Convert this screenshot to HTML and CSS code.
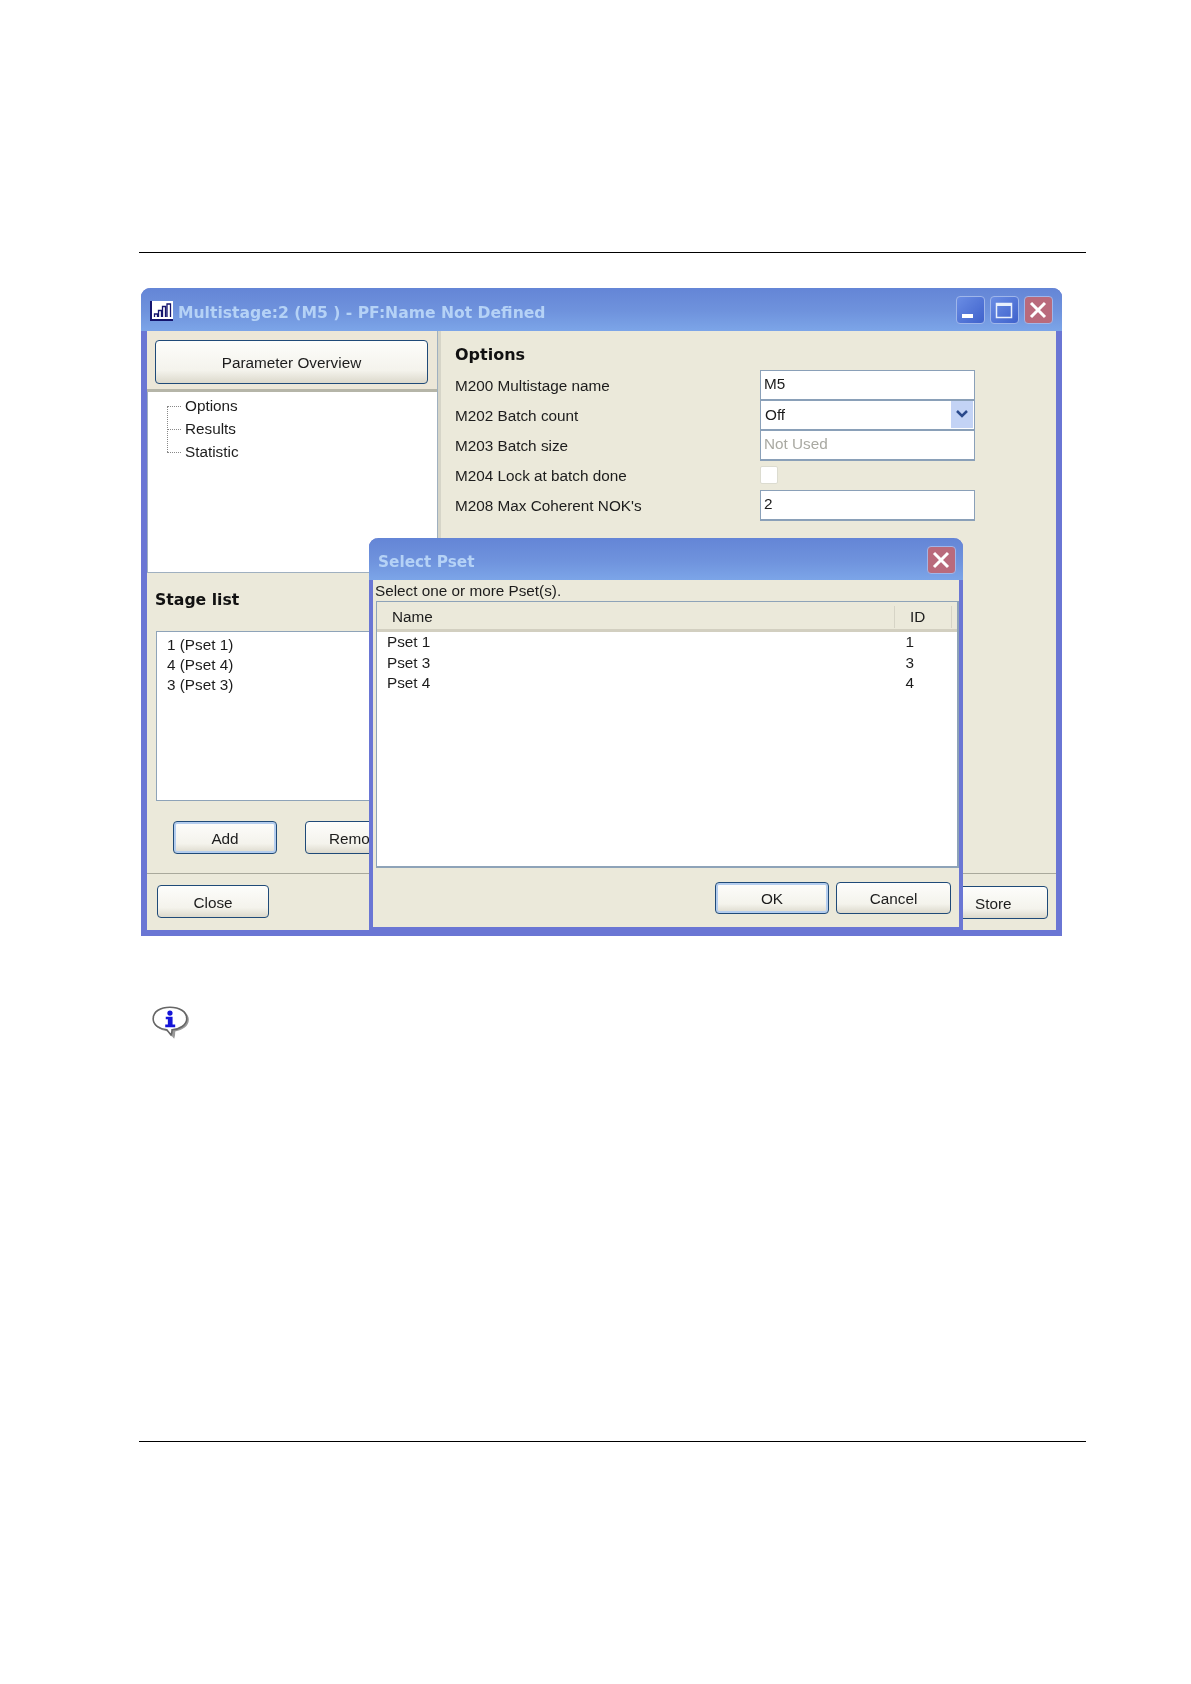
FILE: index.html
```html
<!DOCTYPE html>
<html lang="en">
<head>
<meta charset="utf-8">
<title>Multistage</title>
<link rel="stylesheet" href="styles.css">
</head>
<body>
<main class="page">
  <hr class="rule">
  <section class="win">
    <header class="titlebar">
      <svg class="app-icon" viewBox="0 0 23 20" width="23" height="20">
        <rect width="23" height="20" fill="#fff"/>
        <path d="M1 0V19H23" fill="none" stroke="#14146e" stroke-width="2"/>
        <path d="M4.500 16v-3h3v3M8.500 16V9.500h3V16M12.500 16V5.500h3V16M17 16V3h3.500v13" fill="none" stroke="#14146e" stroke-width="1.300"/>
      </svg>
      <span class="title-text">Multistage:2 (M5 ) - PF:Name Not Defined</span>
      <div class="caption">
        <span class="cap cap-blue"><svg viewBox="0 0 28 28" width="28" height="28"><rect x="6" y="18" width="11" height="4" fill="#fff"/></svg></span>
        <span class="cap cap-blue"><svg viewBox="0 0 28 28" width="28" height="28"><path d="M6.500 7.500h15v14h-15z" fill="none" stroke="#e8f0fc" stroke-width="1.500"/><rect x="6" y="7" width="16" height="3" fill="#e8f0fc"/></svg></span>
        <span class="cap cap-red"><svg viewBox="0 0 28 28" width="28" height="28"><path d="M7 7l14 14M21 7L7 21" stroke="#fff" stroke-width="3"/></svg></span>
      </div>
    </header>

    <div class="client">
      <div class="split">
        <aside class="left">
          <div class="left-top"><button class="btn btn-overview">Parameter Overview</button></div>
          <ul class="tree">
            <li>Options</li>
            <li>Results</li>
            <li>Statistic</li>
          </ul>
          <h2 class="stage-title">Stage list</h2>
          <ul class="stages">
            <li>1 (Pset 1)</li>
            <li>4 (Pset 4)</li>
            <li>3 (Pset 3)</li>
          </ul>
          <div class="stage-actions">
            <button class="btn btn-default btn-add">Add</button>
            <button class="btn btn-remove">Remove</button>
          </div>
        </aside>

        <div class="options">
          <h2 class="options-title">Options</h2>
          <div class="form">
            <label>M200 Multistage name</label>
            <div class="field">M5</div>
            <label>M202 Batch count</label>
            <div class="field field-combo"><span>Off</span>
              <span class="combo-arrow"><svg viewBox="0 0 20 24" width="20" height="24"><path d="M5 9l5 5 5-5" fill="none" stroke="#2b4a8c" stroke-width="2.500"/></svg></span>
            </div>
            <label>M203 Batch size</label>
            <div class="field field-off">Not Used</div>
            <label>M204 Lock at batch done</label>
            <div class="check-cell"><span class="check"></span></div>
            <label>M208 Max Coherent NOK's</label>
            <div class="field">2</div>
          </div>
        </div>
      </div>

      <footer class="win-foot">
        <button class="btn btn-close">Close</button>
        <button class="btn btn-store">Store</button>
      </footer>
    </div>

    <section class="dialog">
      <header class="dlg-title">
        <span class="dlg-title-text">Select Pset</span>
        <span class="cap cap-red"><svg viewBox="0 0 28 28" width="28" height="28"><path d="M7 7l14 14M21 7L7 21" stroke="#fff" stroke-width="3"/></svg></span>
      </header>
      <div class="dlg-client">
        <p class="dlg-msg">Select one or more Pset(s).</p>
        <div class="list">
          <div class="list-head">
            <span class="col-name">Name</span>
            <span class="col-id">ID</span>
          </div>
          <div class="list-row"><span>Pset 1</span><span>1</span></div>
          <div class="list-row"><span>Pset 3</span><span>3</span></div>
          <div class="list-row"><span>Pset 4</span><span>4</span></div>
        </div>
        <div class="dlg-foot">
          <button class="btn btn-default btn-ok">OK</button>
          <button class="btn btn-cancel">Cancel</button>
        </div>
      </div>
    </section>
  </section>

  <div class="note">
    <svg viewBox="0 0 40 34" width="42" height="36">
      <path d="M20 3C10 3 3 7 3 14c0 6 6 10 14 11l6 7c1-3 1-5 1-7 7-1 13-5 13-11C37 7 30 3 20 3z" fill="#9a9a9a"/>
      <path d="M19 2C10 2 3 6 3 13c0 6 6 10 13 10.500l4 5c1-2 1-4 1-5 7-.5 14-4.500 14-10.500C35 6 28 2 19 2z" fill="#fff" stroke="#666" stroke-width="1.500"/>
      <circle cx="19" cy="7.500" r="2.500" fill="#1414d8"/>
      <path d="M15 11h6.500v7.500H24V21H14.500v-2.500H17V13.500h-2z" fill="#1414d8"/>
    </svg>
  </div>

  <hr class="rule rule-bottom">
</main>
</body>
</html>
```

FILE: styles.css
```css
* { box-sizing: border-box; }

html, body {
  margin: 0;
  padding: 0;
  background: #fff;
}

.page {
  height: 1684px;
  padding-top: 252px;
  overflow: hidden;
  font-family: "Liberation Sans", "Noto Sans", sans-serif;
  font-size: 15.300px;
  color: #1c1c1c;
}

.rule {
  height: 1px;
  margin: 0 105px 0 139px;
  border: 0;
  background: #000;
}

.rule-bottom { margin-top: 400px; }

/* main window */
.win {
  position: relative;
  width: 921px;
  height: 648px;
  margin: 35px 0 0 141px;
  border: 6px solid #6a76d4;
  border-top: 0;
  border-radius: 9px 9px 0 0;
  background: #ebe9da;
  filter: blur(0.4px);
}

.titlebar {
  display: flex;
  align-items: center;
  height: 43px;
  margin: 0 -6px;
  padding: 3px 9px 0 9px;
  border-radius: 9px 9px 0 0;
  background: linear-gradient(#6485d6, #6f93dd 55%, #7ca5e8);
}

.app-icon { flex: none; margin-right: 5px; }

.title-text {
  padding-top: 4px;
  font-family: "DejaVu Sans", sans-serif;
  font-weight: 700;
  font-size: 15.600px;
  white-space: nowrap;
  color: #b5d2f6;
}

.caption {
  display: flex;
  gap: 5px;
  margin: -2px 0 0 auto;
}

.cap {
  display: block;
  flex: none;
  width: 29px;
  height: 28px;
  border: 1px solid #9fb6ea;
  border-radius: 4px;
  overflow: hidden;
}

.cap svg { display: block; margin: -1px; }

.cap-blue { background: linear-gradient(135deg, #6a8de4, #3f62cc); }
.cap-red { background: #b96a7c; }

/* client area */
.client {
  display: flex;
  flex-direction: column;
  height: 599px;
}

.split {
  display: flex;
  flex: none;
  height: 543px;
  border-bottom: 1px solid #a9a99c;
}

.left {
  flex: none;
  width: 291px;
  border-right: 1px solid #9fb0c0;
}

.left-top {
  height: 61px;
  padding: 9px 8px 0;
  background: #ece7d8;
  border-bottom: 3px solid #b5b5a8;
}

.btn {
  display: block;
  padding: 2px 0 0;
  border: 1px solid #1f4a78;
  border-radius: 4px;
  background: linear-gradient(#fdfdfb, #f4f3ec 70%, #dcd9cc);
  font-family: inherit;
  font-size: 15.300px;
  color: #1c1c1c;
}

.btn-default {
  box-shadow: inset 0 0 0 2px #b4cdee;
}

.btn-overview { width: 273px; height: 44px; }

.tree {
  position: relative;
  height: 181px;
  margin: 0;
  padding: 3px 0 0 37px;
  list-style: none;
  background: #fff;
  border-bottom: 1px solid #9fb0c0;
  border-left: 1px solid #9fb0c0;
}

.tree::before {
  content: "";
  position: absolute;
  left: 19px;
  top: 14px;
  height: 46px;
  border-left: 1px dotted #888;
}

.tree li {
  position: relative;
  height: 23px;
  line-height: 21px;
}

.tree li::before {
  content: "";
  position: absolute;
  left: -18px;
  top: 11px;
  width: 14px;
  border-top: 1px dotted #888;
}

.stage-title {
  margin: 0;
  height: 58px;
  padding: 14px 0 0 8px;
  font-family: "DejaVu Sans", sans-serif;
  font-weight: 700;
  font-size: 15.700px;
  line-height: 26px;
  color: #111;
}

.stages {
  width: 272px;
  height: 170px;
  margin: 0 0 0 9px;
  padding: 3px 0 0 10px;
  list-style: none;
  background: #fff;
  border: 1px solid #8ea3b8;
}

.stages li {
  height: 20px;
  line-height: 20px;
}

.stage-actions {
  display: flex;
  gap: 28px;
  padding: 20px 0 0 26px;
}

.btn-add { width: 104px; height: 33px; }
.btn-remove { width: 104px; height: 33px; padding-left: 23px; text-align: left; }

/* options */
.options {
  flex: 1;
  padding: 9px 0 0 14px;
  border-left: 3px solid #d6d5c8;
}

.options-title {
  margin: 0;
  height: 30px;
  font-family: "DejaVu Sans", sans-serif;
  font-weight: 700;
  font-size: 16px;
  line-height: 30px;
  color: #111;
}

.form {
  display: grid;
  grid-template-columns: 305px 215px;
  grid-auto-rows: 30px;
  align-items: center;
}

.form label {
  padding-top: 2px;
  line-height: 28px;
}

.field {
  height: 31px;
  padding: 0 0 1px 3px;
  display: flex;
  align-items: center;
  background: #fff;
  border: 2px solid #8aa0b8;
  border-width: 1px 1px 2px;
}

.field-combo {
  justify-content: space-between;
  padding: 0 1px 0 4px;
}

.combo-arrow {
  display: block;
  width: 22px;
  height: 27px;
  padding: 1px 0 0 1px;
  background: #c3d3f5;
}

.combo-arrow svg { display: block; }

.field-off { color: #a9a9a2; }

.check-cell { display: flex; align-items: center; }

.check {
  display: block;
  width: 18px;
  height: 18px;
  background: #fff;
  border: 1px solid #dcdcd0;
  border-radius: 2px;
}

/* footer */
.win-foot {
  display: flex;
  justify-content: space-between;
  flex: 1;
  padding: 11px 8px 0 10px;
}

.btn-close { width: 112px; height: 33px; }
.btn-store { width: 114px; height: 33px; margin-top: 1px; padding-left: 40px; text-align: left; }

/* dialog */
.dialog {
  position: absolute;
  left: 222px;
  top: 250px;
  width: 594px;
  height: 393px;
  border: 4px solid #6a76d4;
  border-top: 0;
  border-radius: 9px 9px 0 0;
  background: #ebe9da;
}

.dlg-title {
  display: flex;
  align-items: center;
  justify-content: space-between;
  height: 42px;
  margin: 0 -4px;
  padding: 3px 7px 0 9px;
  border-radius: 9px 9px 0 0;
  background: linear-gradient(#6485d6, #6f93dd 55%, #7ca5e8);
}

.dlg-title .cap { margin-top: -2px; }

.dlg-title-text {
  padding-top: 2px;
  font-family: "DejaVu Sans", sans-serif;
  font-weight: 700;
  font-size: 15.300px;
  color: #b5d2f6;
}

.dlg-client {
  display: flex;
  flex-direction: column;
  height: 347px;
}

.dlg-msg {
  height: 21px;
  margin: 0;
  padding-left: 2px;
  line-height: 21px;
  white-space: nowrap;
}

.list {
  height: 267px;
  margin: 0 0 0 3px;
  background: #fff;
  border: 2px solid #8ea3b8;
  border-width: 1px 2px 2px 1px;
}

.list-head {
  display: flex;
  align-items: center;
  height: 30px;
  padding-top: 2px;
  background: #ebe9da;
  border-bottom: 3px solid #d2cfc0;
}

.col-name { flex: 1; padding-left: 15px; }

.col-id {
  width: 58px;
  padding-left: 15px;
  border-left: 1px solid #d6d4c6;
  border-right: 1px solid #d6d4c6;
  margin-right: 5px;
  line-height: 22px;
}

.list-row {
  display: flex;
  justify-content: space-between;
  height: 20.500px;
  padding: 0 43px 0 10px;
  line-height: 20px;
}

.dlg-foot {
  display: flex;
  justify-content: flex-end;
  gap: 7px;
  padding: 14px 8px 0 0;
}

.btn-ok { width: 114px; height: 32px; }
.btn-cancel { width: 115px; height: 32px; }

/* note */
.note {
  height: 36px;
  margin: 69px 0 0 150px;
}

.note svg {
  display: block;
  filter: blur(0.5px);
}
```
